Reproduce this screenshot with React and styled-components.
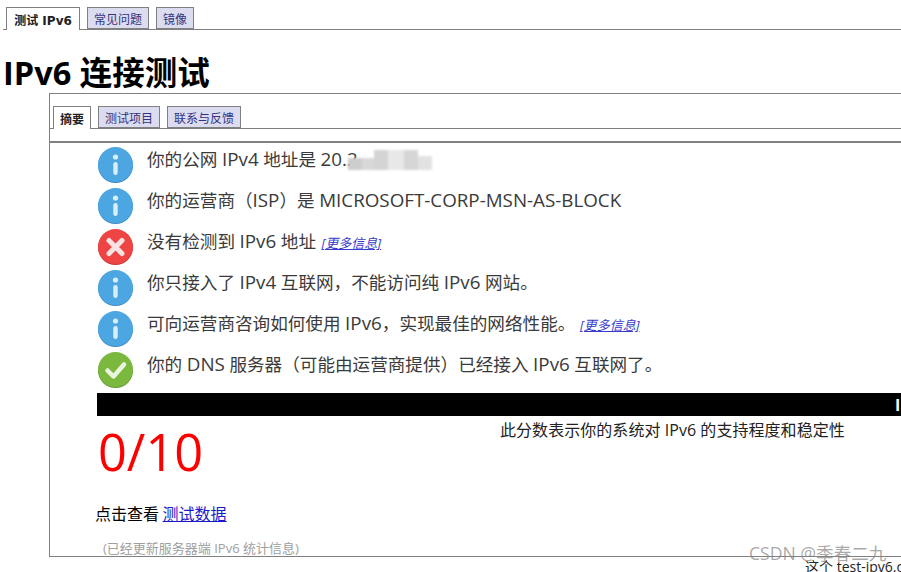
import React from "react";
import styled, { createGlobalStyle } from "styled-components";

const Global = createGlobalStyle`
  html, body { margin: 0; padding: 0; background: #fff; overflow: hidden; }
  body { font-family: "Open Sans", "Noto Sans CJK SC", sans-serif; }
`;
const Page = styled.div`
  position: relative;
  width: 901px;
  height: 572px;
  overflow: hidden;
`;
const TabBar = styled.div`
  display: flex;
  align-items: flex-end;
  gap: ${(p) => p.$gap}px;
  height: ${(p) => p.$height}px;
  padding-left: ${(p) => p.$left}px;
  margin-left: ${(p) => p.$offset || 0}px;
  border-bottom: 1px solid #808080;
`;
const Tab = styled.div`
  box-sizing: border-box;
  height: ${(p) => (p.$active ? 23 : 22)}px;
  width: ${(p) => p.$w}px;
  margin-bottom: ${(p) => (p.$active ? -1 : 0)}px;
  display: flex;
  align-items: center;
  justify-content: center;
  border: 1px solid #808080;
  border-bottom: ${(p) => (p.$active ? "none" : "1px solid #808080")};
  background: ${(p) => (p.$active ? "#fff" : "#dcdcf0")};
  color: ${(p) => (p.$active ? "#222" : "#33337f")};
  font-size: 12px;
  font-family: "DejaVu Sans", "Noto Sans CJK SC", sans-serif;
  font-weight: ${(p) => (p.$active ? 700 : 400)};
  white-space: nowrap;
`;
const Title = styled.h1`
  margin: 0;
  padding: 24px 0 0 3px;
  height: 39px;
  font-size: 32.5px;
  line-height: 37px;
  font-weight: 700;
  color: #000;
  white-space: nowrap;
`;
const Panel = styled.div`
  box-sizing: border-box;
  margin-left: 49px;
  width: 900px;
  height: 464px;
  border: 1px solid #808080;
`;
const Rule = styled.div`
  height: 2px;
  margin-top: 12px;
  background: #808080;
`;
const Rows = styled.div`
  padding: 3px 0 0 48px;
  display: flex;
  flex-direction: column;
`;
const Row = styled.div`
  display: flex;
  align-items: flex-start;
  gap: 14px;
  height: 41px;
  white-space: nowrap;
`;
const Message = styled.div`
  font-size: 17.6px;
  line-height: 26px;
  color: #3a3a3a;
`;
const Latin = styled.span`
  font-size: 18.8px;
`;
const More = styled.a`
  font-size: 13px;
  font-style: italic;
  color: #3a3acc;
  text-decoration: underline;
  margin-left: ${(p) => p.$left || 0}px;
`;
const Smudge = styled.span`
  display: inline-flex;
  vertical-align: -4px;
  filter: blur(1px);
  margin-left: -10px;
`;
const Cell = styled.span`
  display: block;
  width: ${(p) => p.$w}px;
  height: ${(p) => p.$h || 12}px;
  margin-top: ${(p) => 20 - (p.$h || 12)}px;
  background: ${(p) => p.$c};
`;
const ScoreBar = styled.div`
  margin: 1px 0 0 47px;
  height: 23px;
  background: #000;
  display: flex;
  align-items: center;
  color: #fff;
  font-size: 16px;
  font-weight: 700;
  padding-left: 798px;
`;
const ScoreRow = styled.div`
  display: flex;
  align-items: flex-start;
  margin-left: 48px;
  height: 76px;
`;
const Score = styled.div`
  width: 402px;
  font-size: 50.5px;
  line-height: 72px;
  color: #ff0000;
`;
const ScoreNote = styled.div`
  font-size: 16px;
  line-height: 28px;
  letter-spacing: 0.05px;
  color: #222;
  white-space: nowrap;
`;
const DataLine = styled.div`
  margin: 9px 0 0 45px;
  font-size: 16px;
  line-height: 24px;
  color: #000;
  font-family: "Noto Sans CJK SC", sans-serif;
`;
const DataLink = styled.a`
  color: #1a1acc;
  text-decoration: underline;
`;
const Updated = styled.div`
  margin: 13px 0 0 53px;
  font-size: 13px;
  line-height: 20px;
  color: #a0a0a0;
`;
const Footer = styled.div`
  margin: 1px 0 0 805px;
  font-size: 14px;
  line-height: 18px;
  color: #222;
  white-space: nowrap;
`;
const Watermark = styled.div`
  position: absolute;
  left: 749px;
  top: 543px;
  font-size: 17.6px;
  line-height: 20px;
  color: rgba(130, 130, 130, 0.7);
  white-space: nowrap;
`;

const colors = {
  info: ["#4ba6e2", "#3d8cc6"],
  err: ["#ef4444", "#c93434"],
  ok: ["#7ab83e", "#5f9a30"],
};
function StatusIcon({ type }) {
  const [main, dark] = colors[type];
  return (
    <svg width="35" height="37" viewBox="0 0 35 37" style={{ flex: "none", marginTop: 1 }}>
      <circle cx="17.5" cy="18.6" r="17.5" fill={dark} />
      <circle cx="17.5" cy="17.6" r="17.5" fill={main} />
      {type === "info" && (
        <g fill="#d9eefb">
          <circle cx="17.5" cy="10" r="2.6" />
          <rect x="15.3" y="15" width="4.4" height="13" rx="2.2" />
        </g>
      )}
      {type === "err" && (
        <path d="M11 11.5 L24 24.5 M24 11.5 L11 24.5" stroke="#fbe3e3" strokeWidth="5" strokeLinecap="round" />
      )}
      {type === "ok" && (
        <path d="M9.5 18.5 L15.5 24.5 L26 12.5" fill="none" stroke="#e9f5dc" strokeWidth="4.5" strokeLinecap="round" strokeLinejoin="round" />
      )}
    </svg>
  );
}

export default function App() {
  return (
    <Page>
      <Global />
      <TabBar $gap={7} $height={29} $left={3} $offset={3}>
        <Tab $active $w={74}>测试 IPv6</Tab>
        <Tab $w={62}>常见问题</Tab>
        <Tab $w={38}>镜像</Tab>
      </TabBar>
      <Title>IPv6 连接测试</Title>
      <Panel>
        <TabBar $gap={7} $height={34} $left={3}>
          <Tab $active $w={38}>摘要</Tab>
          <Tab $w={62}>测试项目</Tab>
          <Tab $w={74}>联系与反馈</Tab>
        </TabBar>
        <Rule />
        <Rows>
          <Row>
            <StatusIcon type="info" />
            <Message>
              你的公网 <Latin>IPv4</Latin> 地址是 <Latin>20.2</Latin>
              <Smudge>
                <Cell $w={14} $h={12} $c="#cdcdcd" />
                <Cell $w={12} $h={12} $c="#d8d8d8" />
                <Cell $w={14} $h={20} $c="#d4d4d4" />
                <Cell $w={16} $h={20} $c="#e8e8e8" />
                <Cell $w={14} $h={20} $c="#d6d6d6" />
                <Cell $w={14} $h={14} $c="#e2e2e2" />
              </Smudge>
            </Message>
          </Row>
          <Row>
            <StatusIcon type="info" />
            <Message>
              你的运营商（<Latin>ISP</Latin>）是 <Latin>MICROSOFT-CORP-MSN-AS-BLOCK</Latin>
            </Message>
          </Row>
          <Row>
            <StatusIcon type="err" />
            <Message>
              没有检测到 <Latin>IPv6</Latin> 地址 <More $left={1}>[更多信息]</More>
            </Message>
          </Row>
          <Row>
            <StatusIcon type="info" />
            <Message>
              你只接入了 <Latin>IPv4</Latin> 互联网，不能访问纯 <Latin>IPv6</Latin> 网站。
            </Message>
          </Row>
          <Row>
            <StatusIcon type="info" />
            <Message>
              可向运营商咨询如何使用 <Latin>IPv6</Latin>，实现最佳的网络性能。 <More>[更多信息]</More>
            </Message>
          </Row>
          <Row>
            <StatusIcon type="ok" />
            <Message>
              你的 <Latin>DNS</Latin> 服务器（可能由运营商提供）已经接入 <Latin>IPv6</Latin> 互联网了。
            </Message>
          </Row>
        </Rows>
        <ScoreBar>I</ScoreBar>
        <ScoreRow>
          <Score>0/10</Score>
          <ScoreNote>此分数表示你的系统对 IPv6 的支持程度和稳定性</ScoreNote>
        </ScoreRow>
        <DataLine>
          点击查看 <DataLink>测试数据</DataLink>
        </DataLine>
        <Updated>(已经更新服务器端 IPv6 统计信息)</Updated>
      </Panel>
      <Footer>这个 test-ipv6.com</Footer>
      <Watermark>CSDN @季春二九</Watermark>
    </Page>
  );
}
